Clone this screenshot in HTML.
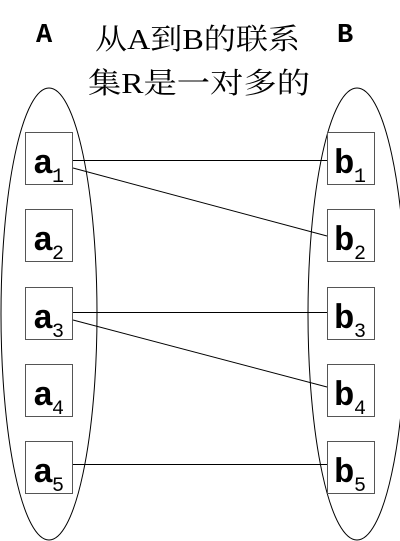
<!DOCTYPE html><html><head><style>body{margin:0;background:#fff}svg{display:block}</style></head><body>
<svg width="400" height="541" xmlns="http://www.w3.org/2000/svg">
<g fill="none" stroke="#000" stroke-width="1">
<ellipse cx="49" cy="314" rx="48" ry="226"/>
<ellipse cx="357" cy="314" rx="49" ry="226"/>
<g stroke="#555">
<rect x="25.5" y="132.5" width="47" height="52"/><rect x="25.5" y="209.5" width="47" height="52"/><rect x="25.5" y="287.5" width="47" height="52"/><rect x="25.5" y="364.5" width="47" height="52"/><rect x="25.5" y="441.5" width="47" height="52"/>
<rect x="327.5" y="132.5" width="47" height="52"/><rect x="327.5" y="209.5" width="47" height="52"/><rect x="327.5" y="287.5" width="47" height="52"/><rect x="327.5" y="364.5" width="47" height="52"/><rect x="327.5" y="441.5" width="47" height="52"/>
</g>
<line x1="73" y1="160.5" x2="327" y2="160.5"/>
<line x1="73" y1="168" x2="327" y2="236"/>
<line x1="73" y1="312.5" x2="327" y2="312.5"/>
<line x1="73" y1="320" x2="327" y2="387"/>
<line x1="73" y1="464.5" x2="327" y2="464.5"/>
</g>
<g font-family="'Liberation Mono', monospace" font-weight="bold" fill="#000">
<text x="36" y="42" font-size="27">A</text>
<text x="337" y="42" font-size="27">B</text>
</g>
<g font-family="'Liberation Serif', 'Noto Serif CJK SC', serif" font-size="29" fill="#000">
<text x="95" y="49" textLength="205" lengthAdjust="spacingAndGlyphs">从A到B的联系</text>
<text x="88" y="93" textLength="222" lengthAdjust="spacingAndGlyphs">集R是一对多的</text>
</g>
<g font-family="'Liberation Mono', monospace" font-weight="bold" fill="#000" font-size="34">
<text x="33" y="173">a</text><text x="33" y="250">a</text><text x="33" y="328">a</text><text x="33" y="405">a</text><text x="33" y="482">a</text>
<text x="334" y="173">b</text><text x="334" y="250">b</text><text x="334" y="328">b</text><text x="334" y="405">b</text><text x="334" y="482">b</text>
</g>
<g font-family="'Liberation Mono', monospace" fill="#000" font-size="20">
<text x="52" y="182">1</text><text x="52" y="259">2</text><text x="52" y="337">3</text><text x="52" y="414">4</text><text x="52" y="491">5</text>
<text x="354" y="182">1</text><text x="354" y="259">2</text><text x="354" y="337">3</text><text x="354" y="414">4</text><text x="354" y="491">5</text>
</g>
</svg>
</body></html>
